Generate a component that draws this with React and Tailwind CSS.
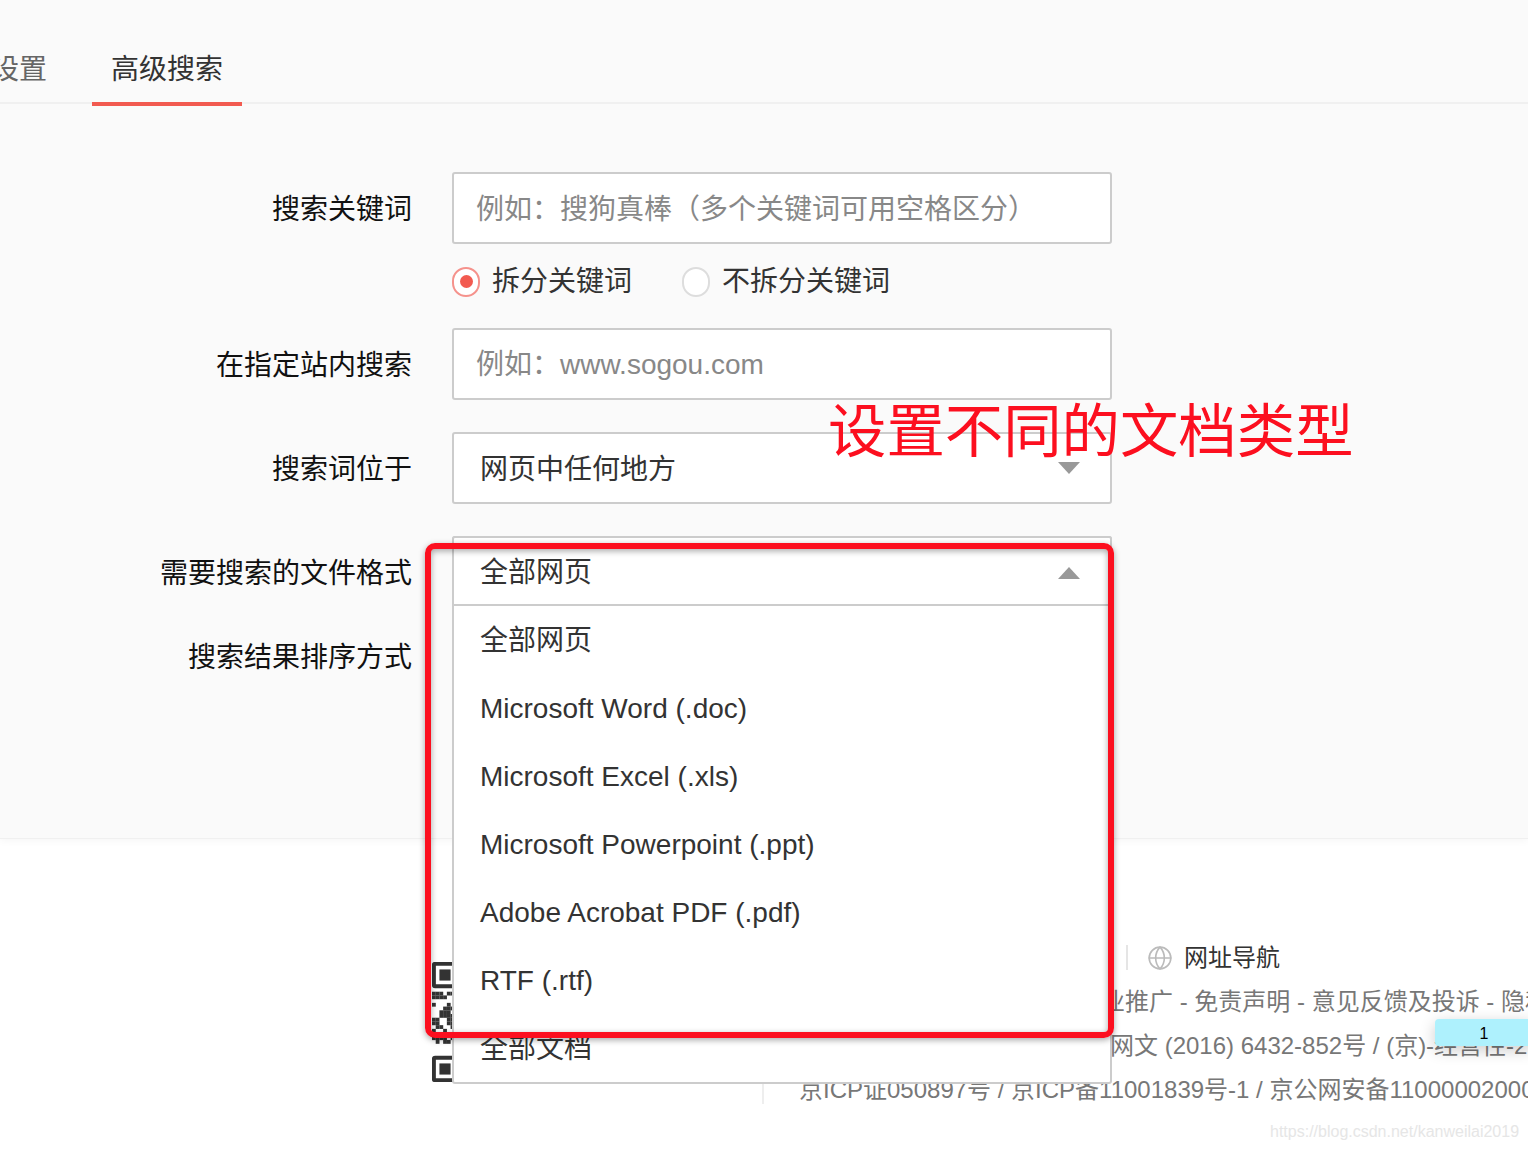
import React from "react";
import { Globe } from "lucide-react";

const FONT = "font-['Liberation_Sans','Noto_Sans_CJK_SC',sans-serif]";

function Label({ children }) {
  return <div className="h-[72px] w-[412px] shrink-0 pt-[2px] text-right text-[28px] leading-[72px] text-[#111]">{children}</div>;
}

function Field({ children, className = "" }) {
  return (
    <div className={`relative flex h-[72px] w-[660px] items-center rounded-[3px] border-2 border-[#ccc] bg-white ${className}`}>
      {children}
    </div>
  );
}

function Radio({ checked, label, className = "" }) {
  return (
    <label className={`flex items-center gap-3 ${className}`}>
      <span className={`mb-[1px] flex h-[30px] w-[28px] items-center justify-center rounded-full border-2 bg-white ${checked ? "border-[#f5928c]" : "border-[#ddd]"}`}>
        {checked && <span className="h-[13px] w-[13px] rounded-full bg-[#f25a50]" />}
      </span>
      <span className="text-[28px] text-[#333]">{label}</span>
    </label>
  );
}

function QR() {
  const cells = [
    [0,8],[1,8],[2,8],[4,8],[5,8],[0,9],[1,9],[2,9],[3,9],
    [0,11],[4,11],[3,12],[4,12],[5,12],[2,13],[3,13],[4,13],[2,14],[3,14],[4,14],[5,14],
    [0,15],[1,15],[4,15],[5,15],[0,16],[1,16],[4,16],[5,16],[1,17],[2,17],[5,17],
    [0,18],[3,18],[1,19],[2,19],[4,19],[5,19],[0,20],[1,20],[2,20],[3,20],[5,20],[1,21],[3,21],[4,21],
  ];
  const finder = (x, y) => (
    <g key={`${x}-${y}`}>
      <rect x={x + 0.5} y={y + 0.5} width="6" height="6" rx="0.3" fill="none" stroke="#333" strokeWidth="1.08" />
      <rect x={x + 2} y={y + 2} width="3" height="3" fill="#333" />
    </g>
  );
  return (
    <svg viewBox="0 0 32.3 32.3" className="h-[120px] w-[120px]">
      {finder(0, 0)}
      {finder(0, 25.3)}
      {finder(25.3, 0)}
      {cells.map(([x, y]) => <rect key={`${x}-${y}`} x={x} y={y} width="1.02" height="1.02" fill="#333" />)}
    </svg>
  );
}

const ITEMS = ["全部网页", "Microsoft Word (.doc)", "Microsoft Excel (.xls)", "Microsoft Powerpoint (.ppt)", "Adobe Acrobat PDF (.pdf)", "RTF (.rtf)", "全部文档"];

function Dropdown() {
  return (
    <div className="absolute -left-[2px] -top-[2px] z-10 w-[660px] rounded-[3px] border-2 border-[#ccc] bg-white">
      <div className="relative flex h-[68px] items-center border-b-2 border-[#ccc] pl-[26px] pt-[4px] text-[28px] text-[#333]">
        全部网页
        <span className="absolute right-[30px] top-[29px] h-0 w-0 border-x-[11px] border-b-[12px] border-x-transparent border-b-[#999]" />
      </div>
      {ITEMS.map((t) => (
        <div key={t} className="flex h-[68px] items-center pl-[26px] pt-[2px] text-[28px] text-[#333]">{t}</div>
      ))}
    </div>
  );
}

export default function App() {
  return (
    <div className={`relative h-[1150px] w-[1528px] overflow-hidden bg-white ${FONT}`}>
      <section className="relative h-[839px] border-b border-[#f0f0f0] bg-[#fafafa] shadow-[0_2px_8px_rgba(0,0,0,0.04)]">
        <nav className="flex h-[104px] border-b-2 border-[#f0f0f0] pl-0">
          <div className="-ml-[29px] px-5 pt-[50px] text-[28px] leading-[40px] text-[#666]">设置</div>
          <div className="ml-[25px] h-[106px] w-[150px] border-b-4 border-[#f25a50] pt-[50px] text-center text-[28px] leading-[40px] text-[#333]">高级搜索</div>
        </nav>

        <form className="pt-[68px]">
          <div className="flex">
            <Label>搜索关键词</Label>
            <Field className="ml-[40px] pl-[22px] pt-[3px] text-[28px] text-[#888]">例如：搜狗真棒（多个关键词可用空格区分）</Field>
          </div>
          <div className="ml-[452px] flex h-[84px] items-center pb-[8px]">
            <Radio checked label="拆分关键词" />
            <Radio label="不拆分关键词" className="ml-[50px]" />
          </div>
          <div className="flex">
            <Label>在指定站内搜索</Label>
            <Field className="ml-[40px] pl-[22px] pt-[2px] text-[28px] text-[#888]">例如：www.sogou.com</Field>
          </div>
          <div className="mt-8 flex">
            <Label>搜索词位于</Label>
            <Field className="ml-[40px] pl-[26px] pt-[3px] text-[28px] text-[#333]">
              网页中任何地方
              <span className="absolute right-[30px] top-[28px] h-0 w-0 border-x-[11px] border-t-[12px] border-x-transparent border-t-[#999]" />
            </Field>
          </div>
          <div className="mt-8 flex">
            <Label>需要搜索的文件格式</Label>
            <Field className="ml-[40px]"><Dropdown /></Field>
          </div>
          <div className="mt-3 flex">
            <Label>搜索结果排序方式</Label>
          </div>
        </form>
      </section>

      <footer className="flex pl-[432px] pt-[106px]">
        <div className="mt-[17px] w-[330px] shrink-0"><QR /></div>
        <div className="h-[159px] min-w-0 flex-1 overflow-hidden border-l-2 border-[#eee] pl-[35px] text-[24px] leading-[44px] text-[#777]">
          <div className="flex h-[25px] items-center whitespace-nowrap pl-[327px] leading-[25px]">
            <span className="h-[25px] border-l-2 border-[#e5e5e5]" />
            <Globe size={26} strokeWidth={1.5} className="ml-[19px] text-[#bbb]" />
            <span className="ml-[11px] text-[#333]">网址导航</span>
          </div>
          <div className="mt-[10px] whitespace-nowrap pl-[278px]">企业推广 - 免责声明 - 意见反馈及投诉 - 隐私政策</div>
          <div className="whitespace-nowrap pl-[287px]">京网文 (2016) 6432-852号 / (京)-经营性-2016</div>
          <div className="whitespace-nowrap">京ICP证050897号 / 京ICP备11001839号-1 / 京公网安备11000002000</div>
        </div>
      </footer>

      <div className="absolute left-[1435px] top-[1019px] flex h-[27px] w-[98px] items-center justify-center rounded-sm bg-[#aef1fd] pt-[2px] text-[16px] text-black shadow-[0_4px_16px_rgba(0,0,0,0.2)]">1</div>
      <div className="absolute left-[1270px] top-[1122px] whitespace-nowrap text-[16px] leading-[20px] text-[#e6e6e6]">https://blog.csdn.net/kanweilai2019</div>

      <div className="absolute left-[828px] top-[390px] z-20 whitespace-nowrap text-[58.4px] leading-[84px] text-[#fc0f1f]">设置不同的文档类型</div>
      <div className="absolute left-[425px] top-[543px] z-20 h-[495px] w-[689px] rounded-[10px] border-[6px] border-[#fc0f1f] shadow-[0_2px_6px_rgba(0,0,0,0.35),inset_0_2px_6px_rgba(0,0,0,0.35)]" />
    </div>
  );
}
